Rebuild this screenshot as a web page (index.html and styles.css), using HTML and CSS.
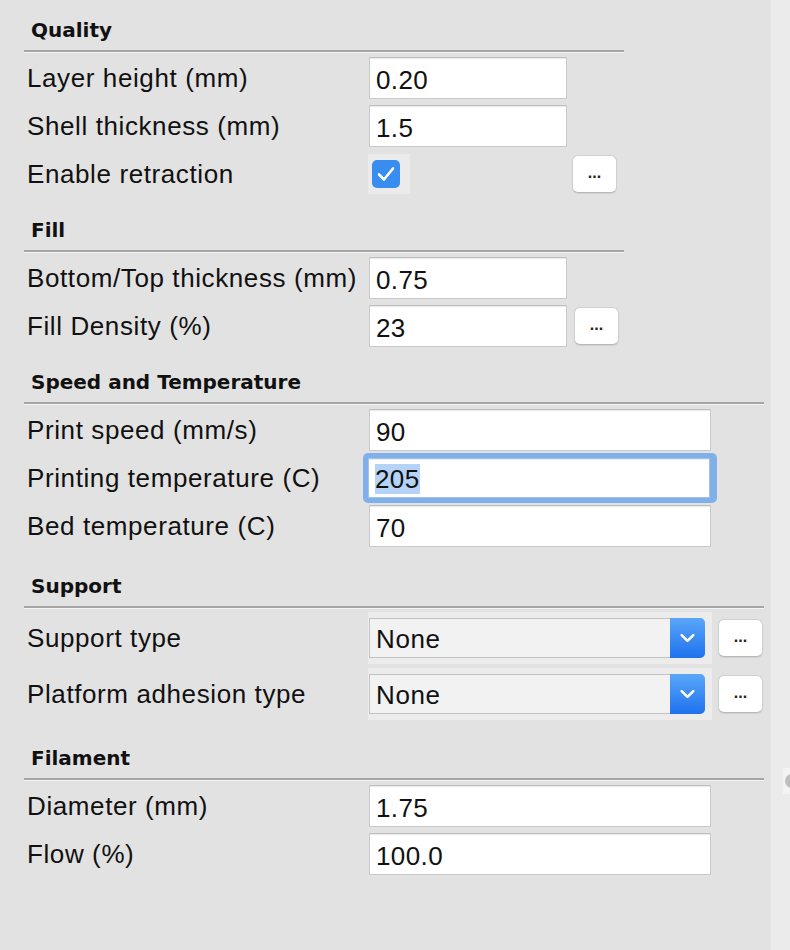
FILE: index.html
```html
<!DOCTYPE html>
<html>
<head>
<meta charset="utf-8">
<link rel="stylesheet" href="styles.css">
</head>
<body>
<div class="window">
  <div class="panel">
    <section class="sec sec-quality">
      <div class="hdr narrow">Quality</div>
      <div class="rows">
        <div class="row"><span class="lbl">Layer height (mm)</span><div class="field short">0.20</div></div>
        <div class="row"><span class="lbl">Shell thickness (mm)</span><div class="field short">1.5</div></div>
        <div class="row"><span class="lbl">Enable retraction</span>
          <div class="checkwrap"><div class="check"><svg viewBox="0 0 28 28" width="28" height="28"><path d="M7 14.5 L12 19.5 L21 8.5" fill="none" stroke="#fff" stroke-width="2.6" stroke-linecap="round" stroke-linejoin="round"/></svg></div></div>
          <div class="btn btn-check">...</div>
        </div>
      </div>
    </section>
    <section class="sec sec-fill">
      <div class="hdr narrow">Fill</div>
      <div class="rows">
        <div class="row"><span class="lbl">Bottom/Top thickness (mm)</span><div class="field short">0.75</div></div>
        <div class="row"><span class="lbl">Fill Density (%)</span><div class="field short">23</div><div class="btn">...</div></div>
      </div>
    </section>
    <section class="sec sec-speed">
      <div class="hdr">Speed and Temperature</div>
      <div class="rows">
        <div class="row"><span class="lbl">Print speed (mm/s)</span><div class="field wide">90</div></div>
        <div class="row"><span class="lbl">Printing temperature (C)</span><div class="focus"><div class="field wide"><span class="sel">205</span></div></div></div>
        <div class="row"><span class="lbl">Bed temperature (C)</span><div class="field wide">70</div></div>
      </div>
    </section>
    <section class="sec sec-support">
      <div class="hdr">Support</div>
      <div class="rows">
        <div class="row tall"><span class="lbl">Support type</span>
          <div class="selwrap"><div class="select"><span class="seltext">None</span><span class="arrow"><svg viewBox="0 0 36 40" width="35" height="40"><path d="M12 17 L18 23 L24 17" fill="none" stroke="#fff" stroke-width="2.6" stroke-linecap="round" stroke-linejoin="round"/></svg></span></div></div>
          <div class="btn btn-sel">...</div>
        </div>
        <div class="row tall"><span class="lbl">Platform adhesion type</span>
          <div class="selwrap"><div class="select"><span class="seltext">None</span><span class="arrow"><svg viewBox="0 0 36 40" width="35" height="40"><path d="M12 17 L18 23 L24 17" fill="none" stroke="#fff" stroke-width="2.6" stroke-linecap="round" stroke-linejoin="round"/></svg></span></div></div>
          <div class="btn btn-sel">...</div>
        </div>
      </div>
    </section>
    <section class="sec sec-filament">
      <div class="hdr">Filament</div>
      <div class="rows">
        <div class="row"><span class="lbl">Diameter (mm)</span><div class="field wide">1.75</div></div>
        <div class="row"><span class="lbl">Flow (%)</span><div class="field wide">100.0</div></div>
      </div>
    </section>
  </div>
  <div class="strip"><div class="knob"></div></div>
</div>
</body>
</html>
```

FILE: styles.css
```css
html, body {
  margin: 0;
  padding: 0;
  background: #e2e2e2;
}
.window {
  display: flex;
  width: 790px;
  height: 950px;
  overflow: hidden;
}
.panel {
  width: 770px;
  flex: none;
  background: #e2e2e2;
  padding-top: 18px;
  box-sizing: border-box;
}
.strip {
  flex: 1;
  background: #ebebeb;
  border-left: 1px solid #e6e6e6;
  padding-top: 768px;
  box-sizing: border-box;
}
.knob {
  margin-left: 12px;
  width: 12px;
  height: 26px;
  background: #f3f3f3;
  position: relative;
}
.knob::after {
  content: "";
  position: absolute;
  left: 2px;
  top: 6px;
  width: 14px;
  height: 14px;
  border-radius: 50%;
  background: #bdbdbd;
}
.sec { margin-left: 24px; }
.sec-fill, .sec-speed { margin-top: 20px; }
.sec-support, .sec-filament { margin-top: 24px; }

.hdr {
  font-family: "DejaVu Sans", "Liberation Sans", sans-serif;
  font-weight: bold;
  font-size: 20px;
  line-height: 24px;
  color: #111;
  padding-left: 7px;
  padding-bottom: 8px;
  width: 740px;
  box-sizing: border-box;
  border-bottom: 2px solid #a5a5a5;
  box-shadow: 0 1px 0 #f4f4f4;
}
.hdr.narrow { width: 600px; }
.rows { padding-top: 2px; }
.row {
  height: 48px;
  display: flex;
  align-items: center;
  font-family: "Liberation Sans", Arial, sans-serif;
  font-size: 26px;
  letter-spacing: 0.6px;
  color: #111;
}
.row.tall { height: 56px; }
.lbl {
  width: 345px;
  flex: none;
  padding-left: 3px;
  box-sizing: border-box;
  white-space: nowrap;
}
.field {
  height: 42px;
  box-sizing: border-box;
  background: #fff;
  border: 1px solid #c9c9c9;
  border-top-color: #bdbdbd;
  box-shadow: inset 0 1px 0 #ececec;
  padding-left: 6px;
  padding-top: 4px;
  font-size: 26px;
  letter-spacing: 0.4px;
  color: #111;
  display: flex;
  align-items: center;
}
.field.short { width: 198px; }
.field.wide { width: 342px; }
.focus {
  margin-left: -6px;
  padding: 5px 7px 5px 5px;
  border-radius: 5px;
  background: #80b0ea;
  display: flex;
}
.focus .field {
  height: 40px;
  border-color: #9fc1ea;
  padding-top: 2px;
}
.sel {
  background: #b5d3f7;
  line-height: 30px;
}
.checkwrap {
  width: 42px;
  height: 40px;
  margin-left: -1px;
  background: #ebebeb;
  display: flex;
  align-items: center;
  padding-left: 4px;
  box-sizing: border-box;
}
.check {
  width: 28px;
  height: 28px;
  border-radius: 5px;
  background: #3a8df0;
  display: flex;
}
.btn {
  width: 45px;
  height: 38px;
  box-sizing: border-box;
  background: #fff;
  border: 1px solid #cfcfcf;
  border-bottom-color: #b9b9b9;
  border-radius: 6px;
  box-shadow: 0 1px 1px rgba(0,0,0,0.08);
  font-family: "Liberation Sans", Arial, sans-serif;
  font-size: 16px;
  font-weight: bold;
  color: #222;
  display: flex;
  align-items: center;
  justify-content: center;
  letter-spacing: 0;
  margin-left: 7px;
  padding-bottom: 2px;
}
.btn-check { margin-left: 162px; }
.selwrap {
  margin-left: -1px;
  width: 344px;
  height: 52px;
  background: #ececec;
  display: flex;
  align-items: center;
  padding-left: 1px;
  box-sizing: border-box;
}
.select {
  width: 336px;
  height: 40px;
  box-sizing: border-box;
  display: flex;
  background: #f2f2f2;
  border: 1px solid #c2c2c2;
  border-right: none;
  border-radius: 0 5px 5px 0;
}
.seltext {
  flex: 1;
  padding-left: 6px;
  line-height: 40px;
  font-size: 26px;
  color: #111;
}
.arrow {
  width: 35px;
  height: 40px;
  margin-top: -1px;
  border-radius: 0 5px 5px 0;
  background: linear-gradient(#5aa6f8, #1f72ef);
  display: flex;
}
.btn-sel { margin-left: 6px; }
```
